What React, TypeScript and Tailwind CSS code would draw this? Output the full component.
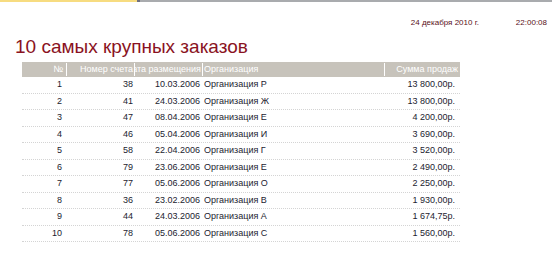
import React from 'react';

type Order = {
  n: number;
  invoice: number;
  date: string;
  org: string;
  sum: string;
};

const orders: Order[] = [
  { n: 1, invoice: 38, date: '10.03.2006', org: 'Организация Р', sum: '13 800,00р.' },
  { n: 2, invoice: 41, date: '24.03.2006', org: 'Организация Ж', sum: '13 800,00р.' },
  { n: 3, invoice: 47, date: '08.04.2006', org: 'Организация Е', sum: '4 200,00р.' },
  { n: 4, invoice: 46, date: '05.04.2006', org: 'Организация И', sum: '3 690,00р.' },
  { n: 5, invoice: 58, date: '22.04.2006', org: 'Организация Г', sum: '3 520,00р.' },
  { n: 6, invoice: 79, date: '23.06.2006', org: 'Организация Е', sum: '2 490,00р.' },
  { n: 7, invoice: 77, date: '05.06.2006', org: 'Организация О', sum: '2 250,00р.' },
  { n: 8, invoice: 36, date: '23.02.2006', org: 'Организация В', sum: '1 930,00р.' },
  { n: 9, invoice: 44, date: '24.03.2006', org: 'Организация А', sum: '1 674,75р.' },
  { n: 10, invoice: 78, date: '05.06.2006', org: 'Организация С', sum: '1 560,00р.' },
];

const cols = 'grid grid-cols-[44px_68px_68px_182px_76px]';

const App: React.FC = () => {
  return (
    <div
      className="w-[552px] h-[256px] bg-white overflow-hidden"
      style={{ fontFamily: '"Liberation Sans", Arial, sans-serif' }}
    >
      {/* top strip */}
      <div className="flex h-[2px]">
        <div className="w-[137px] bg-[#f7dc80]" />
        <div className="w-[3px] bg-[#6e6e7e]" />
        <div className="flex-1 bg-[#a9abae]" />
      </div>

      {/* date + time */}
      <div className="flex justify-end pr-[5px] mt-[16px] text-[8px] leading-[10px] text-[#5a1020]">
        <span>24 декабря 2010 г.</span>
        <span className="ml-[37px]">22:00:08</span>
      </div>

      {/* title */}
      <h1 className="pl-[15px] mt-[8px] text-[19px] leading-[22px] text-[#8a1222]">
        10 самых крупных заказов
      </h1>

      {/* table */}
      <div className="ml-[22px] mt-[4px] w-[438px] text-[9px] text-[#1c1c30]">
        <div className={`${cols} h-[15px] bg-[#c7c3bb] text-white items-center`}>
          <div className="flex justify-end pr-[3px]">№</div>
          <div className="flex justify-end pr-[1px] border-l border-white overflow-hidden whitespace-nowrap">
            Номер счета
          </div>
          <div className="flex justify-end pr-[1px] border-l border-white overflow-hidden whitespace-nowrap">
            Дата размещения
          </div>
          <div className="pl-[1px] border-l border-white">Организация</div>
          <div className="flex justify-end pr-[2px] border-l border-white overflow-hidden whitespace-nowrap">
            Сумма продаж
          </div>
        </div>
        {orders.map((o) => (
          <div
            key={o.n}
            className={`${cols} h-[16.5px] items-center border-b border-dotted border-[#d4d4d4]`}
          >
            <div className="text-right pr-[4px]">{o.n}</div>
            <div className="text-right pr-[1px]">{o.invoice}</div>
            <div className="text-right pr-[2px]">{o.date}</div>
            <div className="pl-[2px]">{o.org}</div>
            <div className="text-right pr-[5px]">{o.sum}</div>
          </div>
        ))}
      </div>
    </div>
  );
};

export default App;
